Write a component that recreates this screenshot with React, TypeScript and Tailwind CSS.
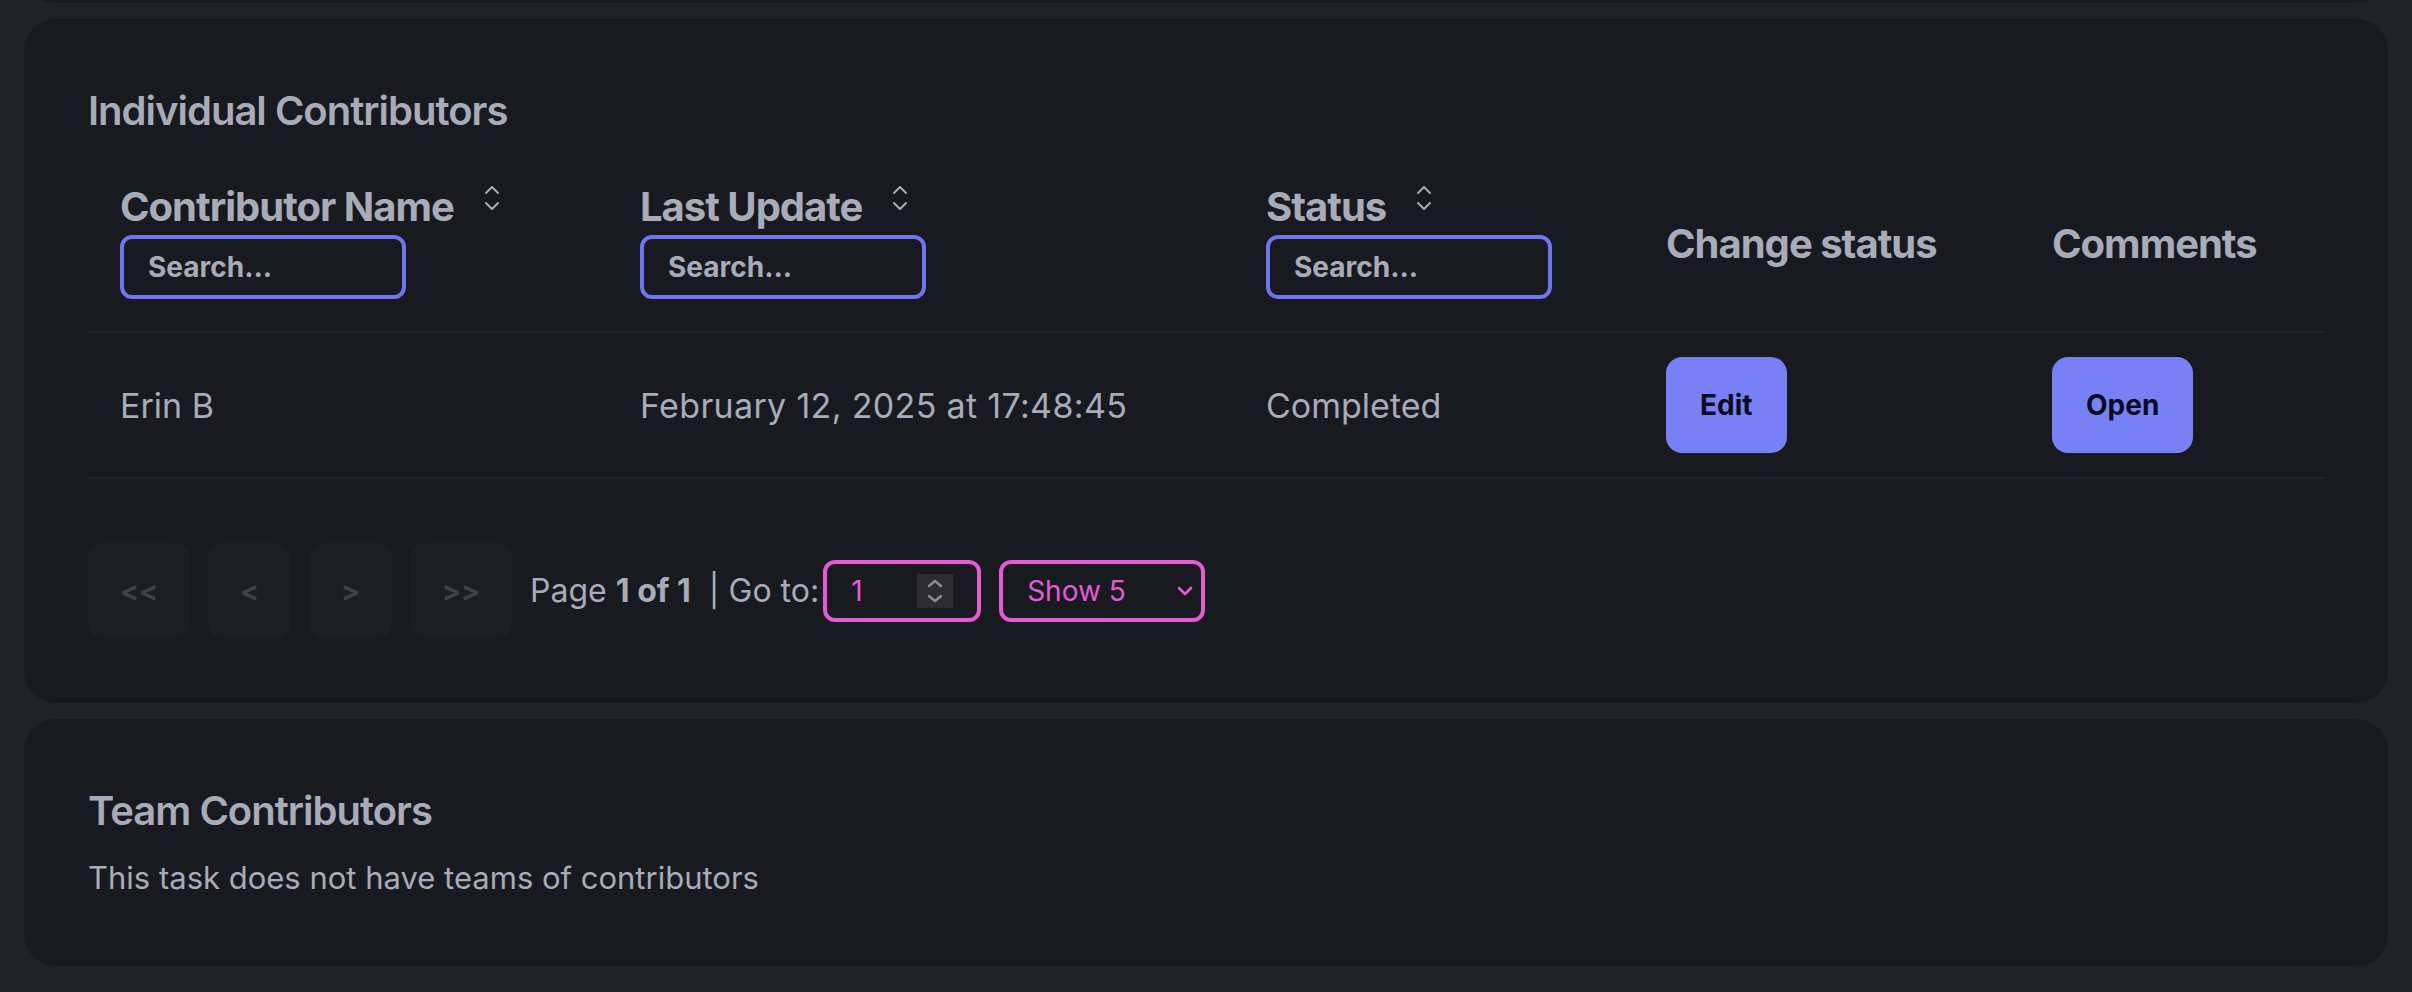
import React from "react";

const SortIcon = () => (
  <svg width="8" height="13" viewBox="0 0 8 13" fill="none" className="ml-[15px] mt-[3px] shrink-0">
    <path d="M1 4 L4 1 L7 4" stroke="#a8abb8" strokeWidth="1" strokeLinecap="round" strokeLinejoin="round" />
    <path d="M1 9 L4 12 L7 9" stroke="#a8abb8" strokeWidth="1" strokeLinecap="round" strokeLinejoin="round" />
  </svg>
);

const SearchBox = () => (
  <input
    type="text"
    placeholder="Search..."
    className="block h-8 w-[143px] rounded-md border-2 border-[#6f76f2] bg-transparent px-3 text-sm font-bold text-[#a8abb8] placeholder:text-[#a8abb8] outline-none"
  />
);

const columns = [
  { label: "Contributor Name", sortable: true, width: "w-[260px]" },
  { label: "Last Update", sortable: true, width: "w-[313px]" },
  { label: "Status", sortable: true, width: "w-[200px]" },
  { label: "Change status", sortable: false, width: "w-[193px]" },
  { label: "Comments", sortable: false, width: "" },
];

const contributors = [
  { name: "Erin B", updated: "February 12, 2025 at 17:48:45", status: "Completed" },
];

const PageButton = ({ children }: { children: React.ReactNode }) => (
  <button
    disabled
    className="h-12 rounded-lg bg-[#1c1e23] px-4 text-sm font-bold text-[#3f424a]"
  >
    {children}
  </button>
);

const App = () => {
  return (
    <div className="min-h-screen overflow-hidden bg-[#1f2229] font-['Inter','Noto_Sans',sans-serif] text-[#a8abb8]">
      <div className="flex flex-col gap-2 px-3 pb-3 [zoom:2]">
        {/* tail of the card above */}
        <div className="-mt-[38.5px] h-10 rounded-2xl bg-[#181a1f]" />

        <section className="rounded-2xl bg-[#181a1f] p-8">
          <h2 className="mb-2 text-xl font-semibold tracking-tight">Individual Contributors</h2>
          <table className="w-full table-fixed border-collapse">
            <thead>
              <tr className="border-b border-[#202329]">
                {columns.map((col) => (
                  <th key={col.label} className={`${col.width} px-4 pt-3 pb-4 text-left align-middle`}>
                    <div className={`flex items-start ${col.sortable ? "" : "mt-[5px]"}`}>
                      <span className="text-xl leading-7 font-bold tracking-tight">{col.label}</span>
                      {col.sortable && <SortIcon />}
                    </div>
                    {col.sortable && <SearchBox />}
                  </th>
                ))}
              </tr>
            </thead>
            <tbody>
              {contributors.map((c) => (
                <tr key={c.name} className="border-b border-[#202329]">
                  <td className="px-4 py-3 text-[17px]">{c.name}</td>
                  <td className="px-4 py-3 text-[17px] tracking-[0.01em]">{c.updated}</td>
                  <td className="px-4 py-3 text-[17px]">{c.status}</td>
                  <td className="px-4 py-3">
                    <button className="h-12 rounded-lg bg-[#7880f5] px-[17px] text-sm font-bold text-[#0b0b1e]">
                      Edit
                    </button>
                  </td>
                  <td className="px-4 py-3">
                    <button className="h-12 rounded-lg bg-[#7880f5] px-[17px] text-sm font-bold text-[#0b0b1e]">
                      Open
                    </button>
                  </td>
                </tr>
              ))}
            </tbody>
          </table>

          <div className="mt-8 flex items-center gap-[9px]">
            <PageButton>{"<<"}</PageButton>
            <PageButton>{"<"}</PageButton>
            <PageButton>{">"}</PageButton>
            <PageButton>{">>"}</PageButton>
            <span className="text-base">
              Page <strong>1 of 1</strong>
            </span>
            <span className="flex items-center text-base">
              | Go to:
              <span className="ml-[2px] flex h-[31px] w-[79px] items-center justify-between rounded-md border-2 border-[#e55bd5] px-3 text-sm text-[#e55bd5]">
                1
                <span className="flex h-[17px] w-[18px] items-center justify-center bg-[#2d2c35]">
                  <svg width="8" height="12" viewBox="0 0 8 12" fill="none">
                    <path d="M1 3.5 L4 1 L7 3.5" stroke="#8d8b96" strokeWidth="1.2" strokeLinecap="round" strokeLinejoin="round" />
                    <path d="M1 8.5 L4 11 L7 8.5" stroke="#8d8b96" strokeWidth="1.2" strokeLinecap="round" strokeLinejoin="round" />
                  </svg>
                </span>
              </span>
            </span>
            <span className="flex h-[31px] w-[103px] items-center justify-between rounded-md border-2 border-[#e55bd5] pr-1 pl-3 text-sm text-[#e55bd5]">
              Show 5
              <svg width="8" height="5" viewBox="0 0 8 5" fill="none">
                <path d="M1 1 L4 4 L7 1" stroke="#e55bd5" strokeWidth="1.3" strokeLinecap="round" strokeLinejoin="round" />
              </svg>
            </span>
          </div>
        </section>

        <section className="rounded-2xl bg-[#181a1f] p-8">
          <h2 className="mb-2 text-xl font-semibold tracking-tight">Team Contributors</h2>
          <p className="text-[15.5px]">This task does not have teams of contributors</p>
        </section>
      </div>
    </div>
  );
};

export default App;
